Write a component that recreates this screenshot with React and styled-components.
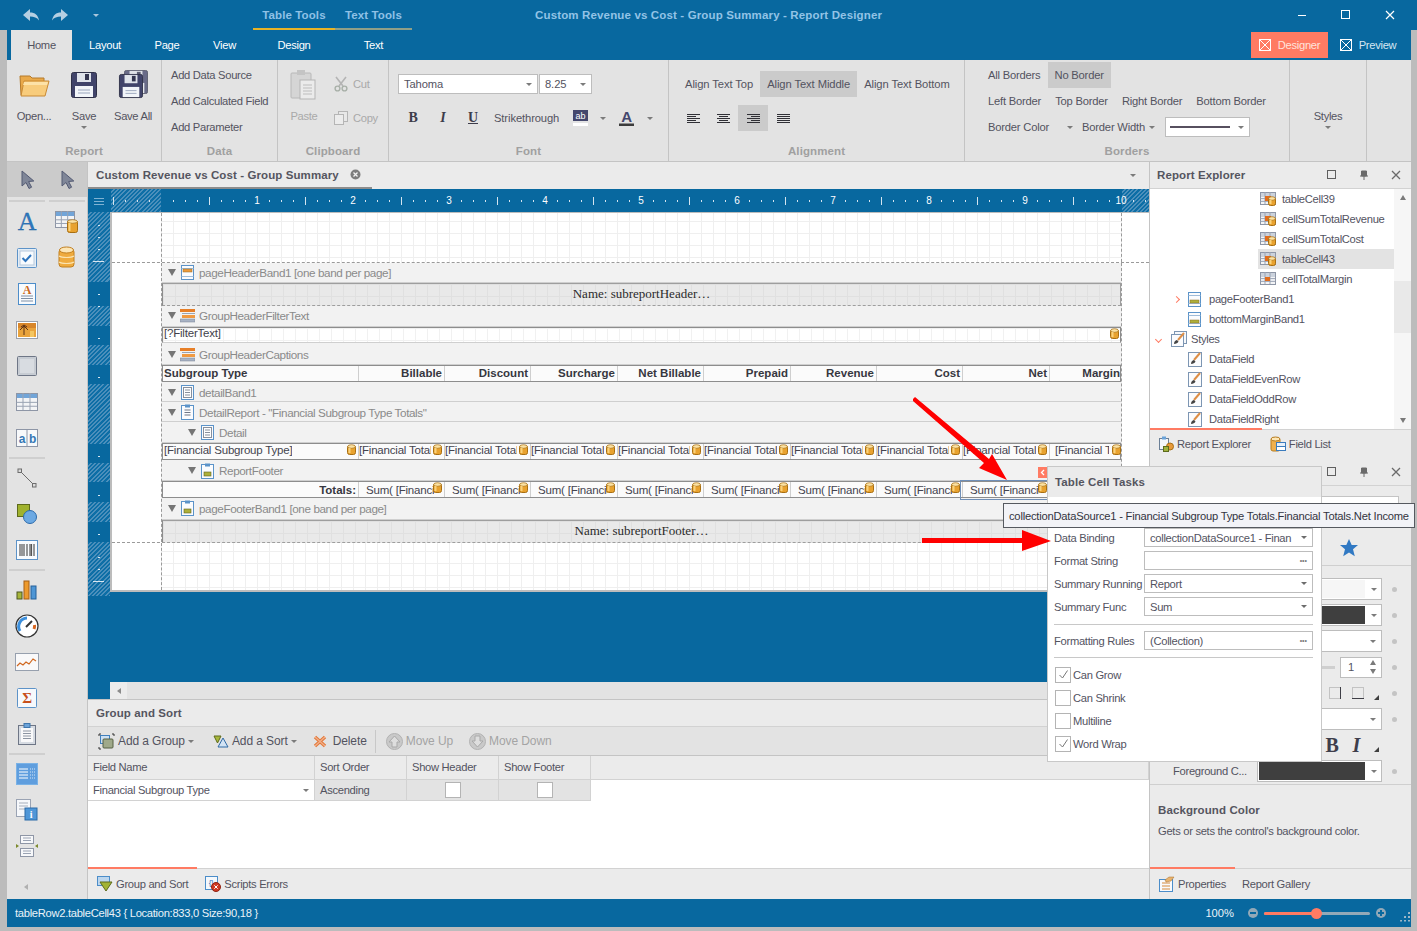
import React from 'react'
import styled, { createGlobalStyle } from 'styled-components'

const BLUE = '#08689f'
const CORAL = '#ff7b63'
const INK = '#53535f'

const GlobalStyle = createGlobalStyle`
  html, body { margin: 0; padding: 0; background: #bcbcbc; overflow: hidden; }
  * { box-sizing: border-box; }
  body { font-family: "Liberation Sans", Arial, sans-serif; font-size: 11.2px; letter-spacing: -0.3px; color: ${INK}; }
`

/* ---------- icons ---------- */
const Svg = ({ w = 16, h, vb, children }) => (
  <svg width={w} height={h || w} viewBox={vb || `0 0 ${w} ${h || w}`} style={{ display: 'block', flex: 'none' }}>{children}</svg>
)

const Undo = () => <Svg w={18} h={14}><path d="M1 7 8 1v3.5c5 0 8 2.5 9 8-2-3-5-4-9-4V13z" fill="#b5cfe2" /></Svg>
const Redo = () => <Svg w={18} h={14}><path d="M17 7 10 1v3.5c-5 0-8 2.5-9 8 2-3 5-4 9-4V13z" fill="#b5cfe2" /></Svg>
const WinMin = () => <Svg w={10}><path d="M1 5.5h8" stroke="#fff" strokeWidth="1" /></Svg>
const WinMax = () => <Svg w={10}><rect x=".5" y=".5" width="8" height="8" fill="none" stroke="#fff" /></Svg>
const WinClose = () => <Svg w={10}><path d="M1 1l8 8M9 1 1 9" stroke="#fff" strokeWidth="1.2" /></Svg>
const CrossBox = () => (
  <Svg w={12}><rect x=".5" y=".5" width="11" height="11" fill="none" stroke="#fff" /><path d="M1 1l10 10M11 1 1 11" stroke="#fff" /></Svg>
)

const Folder = () => (
  <Svg w={32}>
    <path d="M2 7h10l2 2h12v17H3z" fill="#e9a94a" stroke="#b57a2a" />
    <path d="M6 12h25l-4 15H3z" fill="#f8cc7c" stroke="#c98a35" />
    <path d="M6 13h24l-1 3H5z" fill="#fde2a8" />
  </Svg>
)
const FloppyShape = ({ x = 0, y = 0, s = 26, o = 1 }) => (
  <g transform={`translate(${x} ${y}) scale(${s / 26})`} opacity={o}>
    <rect x=".5" y=".5" width="25" height="25" rx="2" fill="#41446a" stroke="#2f3148" />
    <rect x="6" y="1" width="14" height="9" fill="#dfe3ea" />
    <rect x="14" y="2" width="4" height="6" fill="#33354f" />
    <rect x="4" y="14" width="18" height="11" fill="#f2f5f9" />
    <path d="M7 18h12M7 21h12" stroke="#9aa6bd" />
  </g>
)
const Floppy = () => <Svg w={32}><FloppyShape x={3} y={3} /></Svg>
const FloppyStack = () => <Svg w={32}><FloppyShape x={7} y={1} s={24} o={0.75} /><FloppyShape x={2} y={5} s={24} /></Svg>
const Paste = () => (
  <Svg w={32}>
    <rect x="3" y="4" width="20" height="25" rx="1" fill="#d5d5d5" stroke="#b8b8b8" />
    <rect x="9" y="1" width="8" height="5" fill="#c4c4c4" />
    <rect x="12" y="11" width="15" height="19" fill="#ebebeb" stroke="#b5b5b5" />
    <path d="M15 16h9M15 19h9M15 22h9M15 25h9" stroke="#bdbdbd" />
  </Svg>
)
const Cut = () => (
  <Svg w={16}>
    <path d="M3 1l7 9M13 1 6 10" stroke="#b4b4b4" strokeWidth="1.6" />
    <circle cx="4.5" cy="12.5" r="2.4" fill="none" stroke="#a8b0a8" strokeWidth="1.4" />
    <circle cx="11.5" cy="12.5" r="2.4" fill="none" stroke="#a8b0a8" strokeWidth="1.4" />
  </Svg>
)
const Copy = () => (
  <Svg w={16}><rect x="5.5" y="1.5" width="9" height="10" fill="#e8e8e8" stroke="#b5b5b5" /><rect x="1.5" y="4.5" width="9" height="10" fill="#ececec" stroke="#b5b5b5" /></Svg>
)
const AlignLines = ({ kind }) => {
  const rows = [13, kind === 'j' ? 13 : 9, 13, kind === 'j' ? 13 : 9, 13]
  return (
    <Svg w={13} h={11}>
      {rows.map((len, i) => {
        const x = kind === 'r' ? 13 - len : kind === 'c' ? (13 - len) / 2 : 0
        return <rect key={i} x={x} y={i * 2 + 1} width={len} height="1" fill="#303036" />
      })}
    </Svg>
  )
}
const Highlight = () => (
  <Svg w={15} h={16}>
    <rect width="15" height="11" fill="#44476d" />
    <text x="7.5" y="8.5" textAnchor="middle" fontSize="9" fill="#fff" fontFamily="Liberation Sans">ab</text>
    <rect y="13" width="15" height="3" fill="#fff" />
  </Svg>
)
const FontColor = () => (
  <Svg w={15} h={16}>
    <text x="7.5" y="12" textAnchor="middle" fontSize="15" fontWeight="700" fill="#44476d" fontFamily="Liberation Sans">A</text>
    <rect y="13.5" width="15" height="2.5" fill="#3c3c3c" />
  </Svg>
)
const CloseDot = () => (
  <Svg w={11}><circle cx="5.5" cy="5.5" r="5" fill="#7d7d7d" /><path d="M3.5 3.5l4 4M7.5 3.5l-4 4" stroke="#f2f2f2" strokeWidth="1.3" /></Svg>
)
const PanelSquare = () => <Svg w={10}><rect x=".5" y=".5" width="8" height="8" fill="none" stroke="#5f5f5f" /></Svg>
const Pin = () => <Svg w={10}><path d="M2.5 1h5v5h-5zM1 6h8M5 6v4" fill="#6a6a6a" stroke="#6a6a6a" /></Svg>
const PanelClose = () => <Svg w={10}><path d="M1 1l8 8M9 1 1 9" stroke="#6a6a6a" strokeWidth="1.3" /></Svg>

const Cursor = () => (
  <Svg w={16} h={20}><path d="M3 1v15l4-3.5 3 6 2.6-1.3-3-5.7 5.2-.5z" fill="#7f8698" stroke="#535a73" /></Svg>
)
const LetterA = () => (
  <Svg w={22} h={22}>
    <text x="11" y="19" textAnchor="middle" fontSize="26" fontFamily="Liberation Serif" fill="#2f78bd" stroke="#1d5f9e" strokeWidth=".3">A</text>
  </Svg>
)
const GridShape = ({ x = 0, y = 0, w = 22, h = 17, head = '#72a5d8' }) => (
  <g transform={`translate(${x} ${y})`}>
    <rect x=".5" y=".5" width={w} height={h} fill="#f3f4f6" stroke="#8e96a6" />
    <rect x="1" y="1" width={w - 1} height="4" fill={head} />
    <path d={`M.5 ${h * 0.55}H${w}M.5 ${h * 0.78}H${w}M${w / 3} 0V${h}M${(w * 2) / 3} 0V${h}`} stroke="#9aa3b3" />
  </g>
)
const DbShape = ({ x = 0, y = 0, w = 10, h = 12 }) => (
  <g transform={`translate(${x} ${y})`}>
    <rect x=".5" y="1.5" width={w - 1} height={h - 2} rx="2" fill="#e8a22f" stroke="#a86f12" />
    <ellipse cx={w / 2} cy="2.5" rx={w / 2 - 0.7} ry="1.8" fill="#fbe2a4" stroke="#a86f12" strokeWidth=".7" />
    <rect x="1.5" y="4" width="2" height={h - 6} fill="#f9d27c" />
  </g>
)
const TableDb = () => <Svg w={24} h={24}><GridShape x={0} y={1} w={19} h={16} /><DbShape x={12} y={9} w={11} h={14} /></Svg>
const Database = () => (
  <Svg w={18} h={24}>
    <rect x="1" y="3" width="15" height="18" rx="3" fill="#efab3e" stroke="#c18021" />
    <path d="M1 10c3 2 12 2 15 0M1 16c3 2 12 2 15 0" fill="none" stroke="#fbe3ae" strokeWidth="1.2" />
    <ellipse cx="8.5" cy="4" rx="7" ry="3" fill="#fde6b5" stroke="#c18021" />
  </Svg>
)
const CheckTool = () => (
  <Svg w={20}><rect x=".5" y=".5" width="19" height="19" rx="1" fill="#e3edf6" stroke="#5d93c8" /><rect x="3" y="3" width="14" height="14" fill="#f8fbfe" stroke="#b6c8db" /><path d="M5.5 10l3 3 5.5-6" fill="none" stroke="#2e74bd" strokeWidth="2" /></Svg>
)
const RichText = () => (
  <Svg w={18} h={22}>
    <rect x=".5" y=".5" width="17" height="21" fill="#f8fbfe" stroke="#4d8dc9" />
    <text x="9" y="11" textAnchor="middle" fontSize="12" fontWeight="700" fontFamily="Liberation Serif" fill="#cc6a1f">A</text>
    <path d="M3 13h12M3 15.5h12M3 18h12" stroke="#7e90a6" />
  </Svg>
)
const Picture = () => (
  <Svg w={22} h={18}>
    <rect x=".5" y=".5" width="21" height="17" fill="#fff" stroke="#9aa0ab" />
    <rect x="2" y="2" width="18" height="14" fill="#e9a33c" />
    <rect x="2" y="2" width="18" height="5" fill="#d8862a" />
    <path d="M8 4v10M5 6l3-2 3 2M4 9l4-4 4 4" stroke="#5b3216" fill="none" />
    <rect x="14" y="10" width="4" height="6" fill="#f4c661" />
  </Svg>
)
const PanelTool = () => (
  <Svg w={20}><rect x=".5" y=".5" width="19" height="19" rx="1" fill="#c7ccd3" stroke="#6e7686" /><rect x="3" y="3" width="14" height="14" fill="#d8dce1" /></Svg>
)
const TableTool = () => <Svg w={22} h={18}><GridShape x={0} y={0} w={21} h={17} /></Svg>
const LabelTool = () => (
  <Svg w={22} h={18}>
    <rect x=".5" y=".5" width="21" height="17" fill="#f7f9fb" stroke="#8e96a6" />
    <path d="M11 .5v17" stroke="#8e96a6" />
    <text x="6" y="14" textAnchor="middle" fontSize="12" fontWeight="700" fill="#3578b5" fontFamily="Liberation Sans">a</text>
    <text x="16.5" y="14" textAnchor="middle" fontSize="12" fontWeight="700" fill="#3578b5" fontFamily="Liberation Sans">b</text>
  </Svg>
)
const LineTool = () => (
  <Svg w={20}><path d="M3 3l14 14" stroke="#6d6d6d" /><rect x="1" y="1" width="3.5" height="3.5" fill="#dcdcdc" stroke="#6d6d6d" /><rect x="15.5" y="15.5" width="3.5" height="3.5" fill="#dcdcdc" stroke="#6d6d6d" /></Svg>
)
const ShapeTool = () => (
  <Svg w={20}><rect x=".5" y=".5" width="12" height="12" fill="#a0b22e" stroke="#5e6b1c" /><circle cx="13" cy="13" r="6.5" fill="#6ca9e3" stroke="#2d6bab" /></Svg>
)
const Barcode = () => (
  <Svg w={22} h={20}>
    <rect x=".5" y=".5" width="21" height="19" fill="#f8fbfe" stroke="#5d93c8" />
    <path d="M4 4v12M6 4v12M8 4v12M11 4v12M14 4v12M15.5 4v12M18 4v12" stroke="#555" strokeWidth="1.2" />
  </Svg>
)
const ChartTool = () => (
  <Svg w={22} h={20}>
    <rect x="1" y="12" width="5" height="7" fill="#a6b53a" stroke="#4c5620" />
    <rect x="8" y="1" width="5" height="18" fill="#ed9a2d" stroke="#a65e14" />
    <rect x="15" y="6" width="5" height="13" fill="#4e96d5" stroke="#24609a" />
  </Svg>
)
const Gauge = () => (
  <Svg w={24}>
    <circle cx="12" cy="12" r="11" fill="#fff" stroke="#333" strokeWidth="1.2" />
    <path d="M5 17A8.5 8.5 0 0 1 12 4" fill="none" stroke="#3c8fdc" strokeWidth="3" />
    <path d="M19 15a8 8 0 0 0 .5-4" fill="none" stroke="#d9661f" strokeWidth="3" />
    <path d="M11 13l6-6" stroke="#333" strokeWidth="2" />
  </Svg>
)
const SparkTool = () => (
  <Svg w={24} h={18}><rect x=".5" y=".5" width="23" height="17" fill="#f9f9fa" stroke="#97a0ae" /><path d="M2 13l3-3 3 2 3-3 3 2 4-5 3 2" fill="none" stroke="#d0671e" strokeWidth="1.2" /></Svg>
)
const SigmaTool = () => (
  <Svg w={20}>
    <rect x=".5" y=".5" width="19" height="19" rx="1" fill="#f6f9fc" stroke="#5d93c8" />
    <text x="10" y="15" textAnchor="middle" fontSize="15" fontWeight="700" fill="#c8501b" fontFamily="Liberation Serif">Σ</text>
  </Svg>
)
const ClipTool = () => (
  <Svg w={18} h={22}>
    <rect x=".5" y="2.5" width="17" height="19" fill="#d6dbe2" stroke="#6e7686" />
    <rect x="3" y="5" width="12" height="14" fill="#f9f9fa" />
    <rect x="6" y=".5" width="6" height="4" fill="#6ba3d9" stroke="#3f76ac" />
    <path d="M5 8h8M5 10.5h8M5 13h8M5 15.5h8" stroke="#8d95a2" />
  </Svg>
)
const TocTool = () => (
  <Svg w={22}>
    <rect x=".5" y=".5" width="21" height="21" fill="#5f9ede" stroke="#7ab2e6" />
    <path d="M3 6h9M3 9h9M3 12h9M3 15h9" stroke="#fff" />
    <path d="M14 6h5M14 9h5M14 12h5M14 15h5" stroke="#d4e6f7" strokeDasharray="1 1" />
  </Svg>
)
const PageInfo = () => (
  <Svg w={22}>
    <rect x=".5" y=".5" width="14" height="17" fill="#f6f8fb" stroke="#9aa3b3" />
    <path d="M3 4h9M3 7h9M3 10h9" stroke="#a6aebb" />
    <rect x="9" y="9" width="12" height="12" fill="#4f97d8" stroke="#2b6aa8" />
    <text x="15" y="19" textAnchor="middle" fontSize="10" fontWeight="700" fill="#fff" fontFamily="Liberation Serif">i</text>
  </Svg>
)
const CrossBand = () => (
  <Svg w={22}>
    <rect x="4.5" y=".5" width="13" height="8" fill="#f7f8fa" stroke="#8e96a6" />
    <rect x="4.5" y="13.5" width="13" height="8" fill="#f7f8fa" stroke="#8e96a6" />
    <path d="M7 3h8M7 5.5h8M7 16h8M7 18.5h8" stroke="#9aa3b3" />
    <path d="M0 9l3 2-3 2zM22 9l-3 2 3 2z" fill="#7d8a2c" />
  </Svg>
)

const BandPage = ({ slot = 'top', tone = '#ec9a3c' }) => (
  <Svg w={13} h={15}>
    <rect x=".5" y=".5" width="12" height="14" fill="#fbfcfe" stroke="#5b93c9" />
    <path d="M.5 3.5h12M.5 11.5h12" stroke="#9fbcd9" />
    <rect x="2" y={slot === 'top' ? 4 : 8} width="9" height="3" fill={tone} stroke="#8c6a2a" strokeWidth=".5" />
  </Svg>
)
const BandGroup = () => (
  <Svg w={15} h={15}>
    <rect y="1" width="15" height="3" fill="#e77f27" />
    <rect x="2" y="5" width="13" height="1" fill="#9ba4b2" />
    <rect x="2" y="7" width="13" height="3" fill="#f09a42" />
    <rect y="11" width="15" height="3" fill="#a8b3c4" stroke="#788294" strokeWidth=".5" />
  </Svg>
)
const BandDetail = () => (
  <Svg w={13} h={15}>
    <rect x=".5" y=".5" width="12" height="14" fill="#fbfcfe" stroke="#5b93c9" />
    <rect x="2.5" y="2.5" width="8" height="10" fill="#fff" stroke="#878f9c" />
    <path d="M4 5h5M4 7.5h5M4 10h5" stroke="#878f9c" />
  </Svg>
)
const BandDetailReport = () => (
  <Svg w={13} h={16}>
    <rect x=".5" y="1.5" width="12" height="14" fill="#fbfcfe" stroke="#5b93c9" />
    <rect x="4" y=".5" width="5" height="3" fill="#5b93c9" />
    <path d="M3.5 6h6M3.5 8.5h6M3.5 11h6" stroke="#6e7686" />
  </Svg>
)
const BandFooter = () => (
  <Svg w={13} h={16}>
    <rect x=".5" y="1.5" width="12" height="14" fill="#fbfcfe" stroke="#5b93c9" />
    <rect x="4" y=".5" width="5" height="3" fill="#5b93c9" />
    <rect x="3" y="9" width="7" height="4" fill="#adb03a" stroke="#5f6220" strokeWidth=".6" />
  </Svg>
)
const SmallDb = () => <Svg w={9} h={11}><DbShape w={9} h={11} /></Svg>

const CellDb = () => <Svg w={16}><GridShape y={1} w={15} h={12} head="#cbd2dc" /><rect x="5" y="5" width="6" height="5" fill="#e06c1d" /><DbShape x={8} y={5} w={8} h={10} /></Svg>
const CellPlain = () => <Svg w={16}><GridShape y={1} w={15} h={12} head="#cbd2dc" /><rect x="5" y="6" width="5" height="4" fill="#e06c1d" /></Svg>
const TreeFooter = () => <BandPage slot="bottom" tone="#adb03a" />
const BrushDoc = () => (
  <Svg w={14} h={15}>
    <rect x=".5" y=".5" width="13" height="14" fill="#fbfcfe" stroke="#7d96b3" />
    <path d="M12 1 6 8" stroke="#dd8e47" strokeWidth="2" />
    <path d="M3 12c0-3 2-4 3-4l1.5 1.5C7 11 5 12 3 12z" fill="#444" />
  </Svg>
)
const StylesDoc = () => (
  <Svg w={16}>
    <rect x="3.5" y=".5" width="12" height="12" fill="#f6f8fb" stroke="#7d96b3" />
    <rect x=".5" y="3.5" width="12" height="12" fill="#fbfcfe" stroke="#7d96b3" />
    <path d="M13 2 7 9" stroke="#dd8e47" strokeWidth="2" />
    <path d="M3 13c0-3 2-4 3-4l1.5 1.5C7 12 5 13 3 13z" fill="#444" />
  </Svg>
)
const ExplorerIcon = () => (
  <Svg w={16}>
    <rect x="1.5" y="2.5" width="9" height="11" fill="#f4f6f9" stroke="#6b7f96" />
    <rect x="4" y=".5" width="4" height="3" fill="#6ba3d9" />
    <circle cx="12" cy="10.5" r="3.5" fill="#e79a3a" stroke="#a86f12" />
    <rect x="5.5" y="10.5" width="5" height="5" fill="#9fb23c" stroke="#5e6b1c" />
  </Svg>
)
const FieldListIcon = () => (
  <Svg w={16}>
    <rect x="1" y="2" width="9" height="13" rx="2" fill="#f0b14e" stroke="#b77d20" />
    <ellipse cx="5.5" cy="3" rx="4.5" ry="2" fill="#fde6b5" stroke="#b77d20" />
    <rect x="6.5" y="6.5" width="9" height="4" fill="#e6f0fa" stroke="#3a7bbd" />
    <rect x="6.5" y="10.5" width="9" height="4" fill="#fff" stroke="#3a7bbd" />
  </Svg>
)
const PropsIcon = () => (
  <Svg w={16}>
    <rect x=".5" y="3.5" width="13" height="12" fill="#f9fafc" stroke="#4b8dc9" />
    <path d="M3 7h8M3 10h8M3 13h8" stroke="#d58a3c" />
    <path d="M6 4l4-3h5l-3 4-5 1z" fill="#e8b36e" stroke="#a86f2a" strokeWidth=".5" />
  </Svg>
)
const GroupFilterIcon = () => (
  <Svg w={16}>
    <rect x=".5" y=".5" width="12" height="9" fill="#bcd6ee" stroke="#4b8dc9" />
    <path d="M3 6h12l-6 9z" fill="#a2b334" stroke="#5e6b1c" />
  </Svg>
)
const ScriptErrIcon = () => (
  <Svg w={16}>
    <rect x=".5" y=".5" width="12" height="13" fill="#f4f8fc" stroke="#4b8dc9" />
    <text x="6" y="9" textAnchor="middle" fontSize="8" fill="#3574b4" fontFamily="Liberation Sans">{'{}'}</text>
    <circle cx="11" cy="11" r="4.5" fill="#cf3a22" stroke="#8f2413" />
    <path d="M9.3 9.3l3.4 3.4M12.7 9.3l-3.4 3.4" stroke="#fff" />
  </Svg>
)
const AddGroup = () => (
  <Svg w={17}>
    <path d="M1 3V1h2M14 1h2v2M1 14v2h2" fill="none" stroke="#333" />
    <rect x="2.5" y="2.5" width="9" height="8" fill="#cce0f3" stroke="#3f7fbd" />
    <rect x="5" y="6" width="10" height="9" rx="1" fill="#9fa98a" stroke="#566045" />
  </Svg>
)
const AddSort = () => (
  <Svg w={16}>
    <path d="M1 3h7L4.5 10z" fill="#a8b83d" stroke="#5e6b1c" />
    <path d="M10 5l5 9H5z" fill="#d2e3f4" stroke="#2f6aa6" />
  </Svg>
)
const DeleteX = () => <Svg w={14}><path d="M2 3l10 9M12 3 2 12" stroke="#e2793a" strokeWidth="3.4" /><path d="M2 3l10 9M12 3 2 12" stroke="#f3b08c" strokeWidth="1.2" /></Svg>
const MoveIcon = ({ down }) => (
  <Svg w={17}>
    <circle cx="8.5" cy="8.5" r="8" fill="#c9c9c9" stroke="#b2b2b2" />
    <path d={down ? 'M6 3h5v5h3l-5.5 6L3 8h3z' : 'M6 14h5V9h3L8.5 3 3 9h3z'} fill="#dedede" stroke="#a9a9a9" />
  </Svg>
)
const Star = () => <Svg w={18}><path d="M9 0l2.7 6h6.3l-5 4.3 1.8 7L9 13.5 3.2 17.3 5 10.3 0 6h6.3z" fill="#3179c3" /></Svg>
const BorderSideIcon = ({ side }) => (
  <Svg w={14}>
    <rect x="1.5" y="1.5" width="11" height="11" fill="none" stroke="#9a9a9a" strokeDasharray="1 1" />
    {side === 'right' ? <path d="M12.5 1v12" stroke="#3e3e46" /> : <path d="M1 12.5h12" stroke="#3e3e46" />}
  </Svg>
)
const CellSwatch = styled.span`
  flex: none;
  width: ${p => p.$w || 106}px;
  height: 100%;
  background: ${p => p.$bg};
`

/* ---------- title bar ---------- */
const Window = styled.div`
  position: relative;
  width: 1417px;
  height: 931px;
  display: flex;
  flex-direction: column;
  overflow: hidden;
  background: #bcbcbc;
`
const TitleBar = styled.div`
  flex: none;
  height: 30px;
  display: flex;
  align-items: stretch;
  background: ${BLUE};
`
const QuickAccess = styled.div`
  width: 253px;
  display: flex;
  align-items: center;
  padding-left: 22px;
  gap: 11px;
`
const QuickCaret = styled.i`
  margin-left: 13px;
  border: 3px solid transparent;
  border-top: 3px solid #a9c6dc;
  border-bottom: 0;
`
const ContextTab = styled.div`
  width: ${p => p.$w}px;
  display: flex;
  align-items: center;
  justify-content: center;
  padding-top: 2px;
  font-size: 11.5px;
  letter-spacing: 0.1px;
  font-weight: 700;
  color: #8fc1e6;
  border-bottom: 2px solid ${p => p.$line};
`
const WindowTitle = styled.div`
  margin-left: 123px;
  flex: 1;
  display: flex;
  align-items: center;
  font-size: 11.5px;
  letter-spacing: 0.15px;
  font-weight: 700;
  color: #92c3e6;
  white-space: nowrap;
`
const WinButtons = styled.div`
  display: flex;
  align-items: center;
  gap: 34px;
  padding-right: 22px;
`

/* ---------- ribbon tabs ---------- */
const Frame = styled.div`
  flex: 1;
  min-height: 0;
  display: flex;
  flex-direction: column;
  padding: 0 6px 4px 7px;
`
const TabRow = styled.div`
  flex: none;
  height: 30px;
  display: flex;
  align-items: stretch;
  padding-left: 4px;
  background: ${BLUE};
`
const RibbonTab = styled.div`
  width: ${p => p.$w}px;
  display: flex;
  align-items: center;
  justify-content: center;
  color: ${p => (p.$active ? INK : '#fff')};
  background: ${p => (p.$active ? '#e3e3e3' : 'transparent')};
`
const ModeButton = styled.div`
  margin: 2px 0;
  display: flex;
  align-items: center;
  justify-content: center;
  gap: 7px;
  width: ${p => p.$w}px;
  color: ${p => (p.$active ? '#ffe3dc' : '#d5e6f2')};
  background: ${p => (p.$active ? CORAL : 'transparent')};
`
const ModeGroup = styled.div`
  margin-left: auto;
  margin-right: 9px;
  display: flex;
  gap: 6px;
`

/* ---------- ribbon ---------- */
const Ribbon = styled.div`
  flex: none;
  height: 102px;
  display: flex;
  background: #e3e3e3;
  border-bottom: 1px solid #c4c4c4;
`
const RibbonGroup = styled.section`
  width: ${p => p.$w}px;
  display: flex;
  flex-direction: column;
  border-right: 1px solid #c4c4c4;
  ${p => p.$last && 'flex: 1; border-right: 0;'}
`
const GroupBody = styled.div`
  flex: 1;
  min-height: 0;
  display: flex;
  padding: ${p => p.$pad || '0'};
`
const GroupCaption = styled.div`
  flex: none;
  height: 17px;
  display: flex;
  align-items: flex-start;
  justify-content: center;
  font-size: 11.5px;
  letter-spacing: 0.1px;
  line-height: 14px;
  font-weight: 700;
  color: #a0a0a0;
`
const BigButton = styled.div`
  width: ${p => p.$w}px;
  display: flex;
  flex-direction: column;
  align-items: center;
  padding-top: 9px;
  color: ${p => (p.$off ? '#a9a9a9' : INK)};
`
const BigLabel = styled.span`
  margin-top: 8px;
  line-height: 14px;
  white-space: nowrap;
`
const ArrowDown = styled.i`
  display: inline-block;
  flex: none;
  border: ${p => p.$s || 3}px solid transparent;
  border-top-color: ${p => p.$c || '#7b7b7b'};
  border-bottom: 0;
  margin-left: ${p => p.$ml || 0}px;
  margin-right: ${p => p.$mr || 0}px;
  margin-top: ${p => p.$mt || 0}px;
`
const CmdStack = styled.div`
  display: flex;
  flex-direction: column;
  padding-top: ${p => p.$top || 2}px;
  padding-left: ${p => p.$left || 0}px;
  letter-spacing: ${p => p.$ls || '-0.3px'};
`
const CmdRow = styled.div`
  display: flex;
  align-items: center;
  height: ${p => p.$h || 26}px;
  margin-bottom: ${p => p.$mb || 0}px;
  gap: ${p => p.$gap || 0}px;
`
const Cmd = styled.div`
  height: 26px;
  display: flex;
  align-items: center;
  margin-left: ${p => p.$ml || 0}px;
  padding: 0 ${p => (p.$px === undefined ? 7 : p.$px)}px;
  white-space: nowrap;
  color: ${p => (p.$off ? '#a9a9a9' : INK)};
  background: ${p => (p.$on ? '#cbcbcb' : 'transparent')};
`
const Combo = styled.div`
  height: ${p => p.$h || 20}px;
  width: ${p => (p.$w ? `${p.$w}px` : '100%')};
  margin-left: ${p => p.$ml || 0}px;
  display: flex;
  align-items: center;
  justify-content: space-between;
  padding: 0 5px;
  background: #fff;
  border: 1px solid #bdbdbd;
  color: ${INK};
  white-space: nowrap;
  overflow: hidden;
`
const FontButton = styled.div`
  width: 30px;
  height: 26px;
  display: flex;
  align-items: center;
  justify-content: center;
  font-family: "Liberation Serif", serif;
  font-size: 14px;
  font-weight: 700;
  color: #3c3c4a;
  font-style: ${p => (p.$i ? 'italic' : 'normal')};
  text-decoration: ${p => (p.$u ? 'underline' : 'none')};
`
const AlignButton = styled.div`
  width: 30px;
  height: 26px;
  display: flex;
  align-items: center;
  justify-content: center;
  background: ${p => (p.$on ? '#cbcbcb' : 'transparent')};
`
const LineSample = styled.span`
  flex: 1;
  height: 2px;
  margin: 0 8px 0 -1px;
  background: #57505f;
`
const IconGap = styled.span`
  flex: none;
  width: ${p => p.$w}px;
`

/* ---------- work area ---------- */
const Workspace = styled.div`
  flex: 1;
  min-height: 0;
  display: flex;
`
const Toolbox = styled.aside`
  flex: none;
  width: 81px;
  display: flex;
  flex-direction: column;
  background: #e3e3e3;
  border-right: 1px solid #c4c4c4;
`
const ToolPointers = styled.div`
  flex: none;
  height: 35px;
  display: grid;
  grid-template-columns: 40px 40px;
  align-items: center;
  justify-items: center;
  background: #cbcbcb;
`
const ToolRule = styled.div`
  flex: none;
  display: grid;
  grid-template-columns: 36px 36px;
  gap: 4px;
  padding: ${p => p.$pad || '3px 2px 2px'};
`
const ToolRuleLine = styled.div`
  height: 2px;
  background: ${p => (p.$empty ? 'transparent' : '#cfcfcf')};
`
const ToolRow = styled.div`
  flex: none;
  height: 36px;
  display: grid;
  grid-template-columns: 40px 40px;
  align-items: center;
  justify-items: center;
`
const ToolFoot = styled.div`
  margin-top: auto;
  height: 15px;
  padding-left: 17px;
  display: flex;
  align-items: flex-start;
`
const ScrollLeftGlyph = styled.i`
  border: 3px solid transparent;
  border-right: 4px solid ${p => p.$c || '#8a8a8a'};
  border-left: 0;
`
const Center = styled.main`
  flex: none;
  width: 1061px;
  display: flex;
  flex-direction: column;
`
const PaneHead = styled.header`
  flex: none;
  height: 27px;
  display: flex;
  align-items: center;
  padding: 0 ${p => p.$pr || 8}px 0 ${p => p.$pl || 8}px;
  background: #ebebeb;
  border-bottom: ${p => (p.$noline ? '0' : '1px solid #d2d2d2')};
  font-size: 11.5px;
  letter-spacing: 0.1px;
  font-weight: 700;
  color: #55555f;
`
const DocTitle = styled.div`
  position: relative;
  height: 100%;
  width: 284px;
  margin-left: -8px;
  padding-left: 8px;
  display: flex;
  align-items: center;
  gap: 11px;
  border-bottom: 2px solid #8c8c8c;
`
const PaneTools = styled.div`
  margin-left: auto;
  display: flex;
  align-items: center;
  gap: 22px;
`
const Surface = styled.div`
  flex: 1;
  min-height: 0;
  display: flex;
  flex-direction: column;
  background: ${BLUE};
`
const RulerRow = styled.div`
  flex: none;
  height: 23px;
  display: flex;
`
const Burger = styled.div`
  flex: none;
  width: 22px;
  display: flex;
  align-items: center;
  justify-content: center;
`
const hatch = 'repeating-linear-gradient(135deg, #0d6ea6 0 1.5px, #4c8fbb 1.5px 3px)'
const RulerTrack = styled.div`
  flex: 1;
  display: flex;
  overflow: hidden;
  margin-left: -3px;
  background-image: ${hatch}, ${hatch};
  background-repeat: no-repeat;
  background-size: 50px 100%, 27px 100%;
  background-position: 4px 0, right 0;
`
const RulerCell = styled.div`
  flex: none;
  width: 12px;
  display: flex;
  align-items: center;
  justify-content: center;
  color: #fff;
  font-size: 10px;
  letter-spacing: 0;
`
const RulerDot = styled.i`
  width: 1px;
  height: ${p => p.$h}px;
  background: #d3e4ef;
`
const CanvasRow = styled.div`
  flex: 1;
  min-height: 0;
  display: flex;
  align-items: flex-start;
`
const VRuler = styled.div`
  position: relative;
  flex: none;
  width: 22px;
  display: flex;
  flex-direction: column;
`
const VSeg = styled.div`
  height: ${p => p.$h}px;
  background: ${p => (p.$hatch ? hatch : 'transparent')};
`
const VMark = styled.i`
  position: absolute;
  left: ${p => (p.$long ? 5 : 10)}px;
  width: ${p => (p.$long ? 11 : 2)}px;
  height: 1px;
  background: #d8e7f1;
`
const Page = styled.div`
  flex: 1;
  height: 380px;
  display: flex;
  flex-direction: column;
  background: #fff;
  border-top: 1px solid #bcbcbc;
  border-left: 2px solid #bcbcbc;
  border-bottom: 2px solid #bcbcbc;
`
const grid = (bg, line) => `
  background-color: ${bg};
  background-image: linear-gradient(${line} 1px, transparent 1px), linear-gradient(90deg, ${line} 1px, transparent 1px);
  background-size: 12px 12px;
`
const PageRow = styled.div`
  display: flex;
  height: ${p => p.$h}px;
  ${p => p.$dash && 'border-bottom: 1px dashed #9a9a9a;'}
`
const Gutter = styled.div`
  flex: none;
  width: 49px;
  background: #fff;
`
const RightGutter = styled.div`
  flex: 1;
  background: #fff;
`
const PageBody = styled.div`
  flex: none;
  width: 961px;
  border-left: 1px dashed #9a9a9a;
  border-right: 1px dashed #9a9a9a;
  ${grid('#fff', '#efefef')}
  background-position: 11px 8px;
`
const BandHead = styled.div`
  height: ${p => p.$h || 20}px;
  display: flex;
  align-items: center;
  padding-top: ${p => (p.$tight ? 0 : 1)}px;
  padding-bottom: ${p => (p.$tight ? 1 : 0)}px;
  padding-left: ${p => 6 + (p.$level || 0) * 20}px;
  background: #f2f2f2;
  border-bottom: 1px solid #cfcfcf;
  font-size: 11.7px;
  letter-spacing: -0.4px;
  color: #8a8a8a;
  white-space: nowrap;
  & > svg { margin-left: ${p => (p.$wide ? 4 : 5)}px; margin-right: ${p => (p.$wide ? 4 : 5)}px; }
`
const BandToggle = styled.i`
  flex: none;
  border: 4px solid transparent;
  border-top: 7px solid #757575;
  border-bottom: 0;
`
const GreyBand = styled.div`
  height: ${p => p.$h}px;
  display: flex;
  align-items: center;
  justify-content: center;
  padding-bottom: 2px;
  border: 1px solid #9e9e9e;
  border-left-color: #8d8d8d;
  border-bottom: 1px dashed #9e9e9e;
  ${grid('#e9e9e9', '#e0e0e0')}
  font-family: "Liberation Serif", serif;
  font-size: 13px;
  letter-spacing: 0;
  color: #2b2b2b;
`
const PlainBand = styled.div`
  position: relative;
  height: ${p => p.$h}px;
  display: flex;
  align-items: center;
  padding: 0 0 4px 1px;
  border-top: 1px solid #8d8d8d;
  border-left: 1px solid #8d8d8d;
  border-right: 1px solid #8d8d8d;
  border-bottom: 1px solid #cfcfcf;
  font-size: 11.5px;
  letter-spacing: -0.2px;
  color: #3f3f4a;
  ${grid('#fff', '#f1f1f1')}
`
const BandTable = styled.div`
  height: ${p => p.$h}px;
  display: flex;
  border: 1px solid #8d8d8d;
  background: #fbfbfb;
`
const TableCell = styled.div`
  position: relative;
  flex: none;
  width: ${p => p.$w}px;
  display: flex;
  align-items: center;
  justify-content: ${p => (p.$right ? 'flex-end' : 'flex-start')};
  padding: 0 ${p => (p.$pr === undefined ? 2 : p.$pr)}px ${p => p.$pb || 0}px ${p => p.$pl || 0}px;
  border-right: ${p => (p.$last ? '0' : '1px solid #cfcfcf')};
  font-size: 11.5px;
  letter-spacing: ${p => (p.$bold ? '0' : '-0.2px')};
  font-weight: ${p => (p.$bold ? 700 : 400)};
  color: ${p => (p.$bold ? '#37373f' : '#44444f')};
  white-space: nowrap;
  overflow: hidden;
`
const CellText = styled.span`
  min-width: 0;
  overflow: hidden;
`
const CellBadge = styled.span`
  position: absolute;
  top: ${p => p.$top || 0}px;
  right: ${p => p.$r || 0}px;
`
const HScroll = styled.div`
  flex: none;
  height: 17px;
  margin-left: 22px;
  display: flex;
  background: #e3e3e3;
`
const HScrollLeft = styled.div`
  width: 17px;
  display: flex;
  align-items: center;
  justify-content: center;
  background: #ececec;
`

/* ---------- group and sort ---------- */
const GroupPane = styled.section`
  flex: none;
  height: 169px;
  display: flex;
  flex-direction: column;
  background: #fff;
  border-top: 1px solid #c4c4c4;
`
const SortTools = styled.div`
  flex: none;
  height: 29px;
  display: flex;
  align-items: center;
  padding-left: 10px;
  background: #e3e3e3;
  border-bottom: 1px solid #c4c4c4;
`
const SortTool = styled.div`
  display: flex;
  align-items: center;
  gap: ${p => p.$gap || 3}px;
  margin-right: ${p => p.$mr || 0}px;
  color: ${p => (p.$off ? '#a4a4a4' : INK)};
  font-size: 12px;
  letter-spacing: -0.1px;
`
const SortDivider = styled.span`
  width: 1px;
  height: 23px;
  background: #c8c8c8;
  margin-right: 10px;
`
const SortGrid = styled.div`
  display: grid;
  grid-template-columns: 227px 92px 92px 92px 1fr;
`
const SortHeadCell = styled.div`
  height: 24px;
  display: flex;
  align-items: center;
  padding: 0 0 2px 5px;
  background: #ebebeb;
  border-right: 1px solid #d2d2d2;
  border-bottom: 1px solid #d2d2d2;
`
const SortCell = styled.div`
  height: 21px;
  display: flex;
  align-items: center;
  justify-content: ${p => (p.$center ? 'center' : 'space-between')};
  padding: 0 ${p => (p.$center ? 0 : 5)}px;
  background: ${p => (p.$white ? '#fff' : '#e3e3e3')};
  border-right: 1px solid #d2d2d2;
  border-bottom: 1px solid #d2d2d2;
`
const Box = styled.span`
  flex: none;
  width: 16px;
  height: 16px;
  display: flex;
  align-items: center;
  justify-content: center;
  background: #fff;
  border: 1px solid #b4b4b4;
`
const DockTabs = styled.div`
  flex: none;
  height: ${p => p.$h || 31}px;
  display: flex;
  align-items: center;
  gap: ${p => p.$gap || 17}px;
  padding: 0 0 ${p => p.$pb || 0}px ${p => p.$pl || 9}px;
  background: #ebebeb;
  border-top: 1px solid #d2d2d2;
  position: relative;
`
const DockAccent = styled.i`
  position: absolute;
  left: 0;
  top: -2px;
  height: 2px;
  width: ${p => p.$w}px;
  background: ${CORAL};
`
const DockTab = styled.div`
  display: flex;
  align-items: center;
  gap: 3px;
`

/* ---------- right dock ---------- */
const Dock = styled.aside`
  flex: 1;
  min-width: 0;
  display: flex;
  flex-direction: column;
  background: #ebebeb;
  border-left: 1px solid #c4c4c4;
`
const Tree = styled.div`
  flex: none;
  height: 240px;
  display: flex;
  background: #fff;
`
const TreeList = styled.div`
  flex: 1;
  overflow: hidden;
`
const TreeRow = styled.div`
  height: 20px;
  display: flex;
  align-items: center;
  margin-left: ${p => p.$indent}px;
  padding-left: ${p => p.$pl || 0}px;
  gap: ${p => p.$gap || 8}px;
  color: ${INK};
  background: ${p => (p.$on ? '#e3e3e3' : 'transparent')};
`
const TreeChevron = styled.i`
  flex: none;
  width: 5px;
  height: 5px;
  margin-right: ${p => p.$mr || 0}px;
  border-right: 1.5px solid ${CORAL};
  border-bottom: ${p => (p.$open ? `1.5px solid ${CORAL}` : '0')};
  border-top: ${p => (p.$open ? '0' : `1.5px solid ${CORAL}`)};
  transform: rotate(45deg);
`
const VScroll = styled.div`
  flex: none;
  width: 17px;
  display: flex;
  flex-direction: column;
  align-items: center;
  justify-content: space-between;
  background: #f6f6f6;
`
const ScrollCap = styled.div`
  height: 17px;
  display: flex;
  align-items: center;
  justify-content: center;
`
const ScrollGlyph = styled.i`
  border: 3.5px solid transparent;
  ${p => (p.$up ? 'border-bottom: 5px solid #7a7a7a; border-top: 0;' : 'border-top: 5px solid #7a7a7a; border-bottom: 0;')}
`
const ScrollThumb = styled.div`
  width: 100%;
  height: 52px;
  margin-top: 75px;
  margin-bottom: auto;
  background: #e9e9e9;
`
const QuickPane = styled.div`
  flex: none;
  height: 80px;
  display: flex;
  flex-direction: column;
  border-bottom: 1px solid #cfcfcf;
  padding: 10px 12px 0 8px;
`
const QuickInput = styled.div`
  height: 20px;
  background: #fff;
  border: 1px solid #c4c4c4;
`
const QuickIcons = styled.div`
  margin-top: 23px;
  display: flex;
  justify-content: flex-end;
  padding-right: 41px;
`
const PropRows = styled.div`
  flex: none;
  height: 219px;
  padding-top: 10px;
  border-bottom: 1px solid #cfcfcf;
`
const PropRow = styled.div`
  height: 26px;
  display: flex;
  align-items: center;
  padding-left: 23px;
  white-space: nowrap;
`
const PropLabel = styled.span`
  width: 84px;
  flex: none;
  overflow: hidden;
`
const PropField = styled.div`
  flex: none;
  width: 125px;
  height: 22px;
  display: flex;
  justify-content: flex-end;
  align-items: center;
  gap: ${p => p.$gap || 0}px;
  padding-right: ${p => p.$pr || 0}px;
`
const PropDot = styled.i`
  width: 5px;
  height: 5px;
  margin-left: 10px;
  border-radius: 50%;
  background: #c4c4c4;
`
const SwatchCombo = styled.div`
  width: 100%;
  height: 100%;
  display: flex;
  align-items: center;
  padding: 1px;
  background: #fff;
  border: 1px solid #bdbdbd;
`
const SliderStub = styled.span`
  flex: 1;
  height: 3px;
  margin-right: 5px;
  background: #cfcfcf;
`
const Spinner = styled.div`
  flex: none;
  width: 42px;
  height: 21px;
  display: flex;
  align-items: center;
  justify-content: space-between;
  padding: 0 5px 0 7px;
  background: #fff;
  border: 1px solid #bdbdbd;
`
const SpinArrows = styled.div`
  display: flex;
  flex-direction: column;
  gap: 4px;
`
const StyleLetter = styled.span`
  font-family: "Liberation Serif", serif;
  font-size: 20px;
  line-height: 20px;
  font-weight: 700;
  font-style: ${p => (p.$i ? 'italic' : 'normal')};
  color: #3e3e4c;
`
const Corner = styled.i`
  align-self: flex-end;
  margin-bottom: 4px;
  border-style: solid;
  border-width: 0 0 5px 5px;
  border-color: transparent transparent #3f3f3f transparent;
`
const Describe = styled.div`
  flex: 1;
  padding: 18px 8px 0;
  line-height: 14px;
`
const DescribeTitle = styled.div`
  font-size: 11.5px;
  letter-spacing: 0.1px;
  font-weight: 700;
  margin-bottom: 7px;
  color: #55555f;
`

/* ---------- status bar ---------- */
const StatusBar = styled.footer`
  flex: none;
  height: 28px;
  display: flex;
  align-items: center;
  padding-left: 8px;
  color: #eaf3f9;
  background: ${BLUE};
`
const ZoomBlock = styled.div`
  margin-left: auto;
  display: flex;
  align-items: center;
`
const ZoomPercent = styled.span`
  margin-right: 14px;
  letter-spacing: 0;
`
const ZoomRound = styled.span`
  flex: none;
  width: 10px;
  height: 10px;
  border-radius: 50%;
  background: #93a9b8;
  position: relative;
  &::after {
    content: '';
    position: absolute;
    left: 2px;
    right: 2px;
    top: 4px;
    height: 2px;
    background: ${BLUE};
  }
  ${p => p.$plus && `
    &::before {
      content: '';
      position: absolute;
      top: 2px;
      bottom: 2px;
      left: 4px;
      width: 2px;
      background: ${BLUE};
    }
  `}
`
const ZoomTrack = styled.div`
  position: relative;
  width: 106px;
  height: 3px;
  margin: 0 6px;
  border-radius: 2px;
  background: #93a9b8;
`
const ZoomFill = styled.div`
  height: 100%;
  border-radius: 2px;
  background: ${CORAL};
`
const ZoomThumb = styled.i`
  position: absolute;
  left: 47px;
  top: -4px;
  width: 11px;
  height: 11px;
  border-radius: 50%;
  background: ${CORAL};
`
const Grip = styled.span`
  width: 11px;
  height: 11px;
  margin: 6px 1px 0 13px;
  background-image: radial-gradient(#9fb8c8 1px, transparent 1.2px);
  background-size: 4px 4px;
  clip-path: polygon(100% 0, 100% 100%, 0 100%);
`

/* ---------- overlays ---------- */
const Selection = styled.div`
  position: absolute;
  left: 960px;
  top: 480px;
  width: 88px;
  height: 20px;
  border: 1px solid #6f8fb8;
`
const Tasks = styled.div`
  position: absolute;
  left: 1047px;
  top: 466px;
  width: 275px;
  height: 296px;
  display: flex;
  flex-direction: column;
  background: #fff;
  border: 1px solid #c8c8c8;
`
const TasksHead = styled.div`
  flex: none;
  height: 30px;
  padding-left: 7px;
  display: flex;
  align-items: center;
  font-size: 11.5px;
  letter-spacing: 0.1px;
  font-weight: 700;
  color: #55555f;
  background: #ebebeb;
`
const TasksBody = styled.div`
  padding: 31px 8px 0 6px;
`
const TaskRow = styled.div`
  display: grid;
  grid-template-columns: 90px 1fr;
  align-items: center;
  height: 19px;
  margin-bottom: 4px;
  white-space: nowrap;
`
const TaskField = styled(Combo)`
  height: 19px;
`
const Dots = styled.span`
  letter-spacing: 0;
  font-size: 7px;
  line-height: 8px;
  color: #7a7a7a;
`
const TaskRule = styled.div`
  height: 1px;
  background: #c8c8c8;
  margin: ${p => p.$m};
`
const TaskCheck = styled.div`
  height: 23px;
  display: flex;
  align-items: center;
  gap: 2px;
  padding-left: 1px;
`
const TasksToggle = styled.div`
  position: absolute;
  left: 1038px;
  top: 467px;
  width: 9px;
  height: 11px;
  display: flex;
  align-items: center;
  justify-content: center;
  background: ${CORAL};
`
const Hint = styled.div`
  position: absolute;
  left: 1003px;
  top: 503px;
  width: 412px;
  height: 25px;
  display: flex;
  align-items: center;
  padding-left: 5px;
  background: #f2f3f7;
  border: 1px solid #55595f;
  letter-spacing: -0.22px;
  color: #33333f;
  white-space: nowrap;
`
const ArrowLayer = styled.svg`
  position: absolute;
  left: 0;
  top: 0;
  pointer-events: none;
`

/* ---------- data ---------- */
const COLS = [196, 86, 86, 87, 86, 87, 86, 86, 87, 72]
const CAPTIONS = ['Subgroup Type', 'Billable', 'Discount', 'Surcharge', 'Net Billable', 'Prepaid', 'Revenue', 'Cost', 'Net', 'Margin']
const VSEGS = [[70, 1], [24, 0], [20, 1], [19, 0], [20, 1], [19, 0], [60, 1], [19, 0], [19, 1], [20, 0], [20, 1], [20, 0], [54, 1]]
const VMARKS = [13, 25, 37, 49, 82, 94, 126, 165, 244, 283, 322, 345, 357, 369]
const TOOLS = [
  [LetterA, TableDb], [CheckTool, Database], [RichText], [Picture], [PanelTool], [TableTool], [LabelTool], 'rule',
  [LineTool], [ShapeTool], [Barcode], 'rule',
  [ChartTool], [Gauge], [SparkTool], [SigmaTool], [ClipTool], 'rule',
  [TocTool], [PageInfo], [CrossBand],
]
const TREE = [
  { t: 'tableCell39', i: CellDb, x: 108, pl: 2, gap: 6 }, { t: 'cellSumTotalRevenue', i: CellDb, x: 108, pl: 2, gap: 6 },
  { t: 'cellSumTotalCost', i: CellDb, x: 108, pl: 2, gap: 6 }, { t: 'tableCell43', i: CellDb, x: 108, pl: 2, gap: 6, on: true },
  { t: 'cellTotalMargin', i: CellPlain, x: 108, pl: 2, gap: 6 },
  { t: 'pageFooterBand1', i: TreeFooter, x: 24, chevron: 'r', mr: 1 }, { t: 'bottomMarginBand1', i: TreeFooter, x: 38 },
  { t: 'Styles', i: StylesDoc, x: 6, chevron: 'd', gap: 4, mr: 6 },
  { t: 'DataField', i: BrushDoc, x: 38, gap: 7 }, { t: 'DataFieldEvenRow', i: BrushDoc, x: 38, gap: 7 },
  { t: 'DataFieldOddRow', i: BrushDoc, x: 38, gap: 7 }, { t: 'DataFieldRight', i: BrushDoc, x: 38, gap: 7 },
]

const Ruler = () => {
  const cells = []
  for (let i = 0; i < 87; i++) {
    const k = i - 4
    const n = k > 0 && k % 8 === 0 ? k / 8 : null
    cells.push(
      <RulerCell key={i}>
        {n ? n : k === 0 ? null : <RulerDot $h={k % 4 === 0 ? 8 : 2} />}
      </RulerCell>
    )
  }
  return <RulerTrack>{cells}</RulerTrack>
}

const BandLabel = ({ level, icon: Icon, h, tight, wide, children }) => (
  <BandHead $level={level} $h={h} $tight={tight} $wide={wide}><BandToggle /><Icon />{children}</BandHead>
)

const DataRow = ({ h, cell, first, pb }) => (
  <BandTable $h={h}>
    {COLS.map((w, i) => {
      const plain = first && i === 0
      return (
        <TableCell
          key={i}
          $w={w}
          $last={i === 9}
          $right={plain}
          $bold={plain}
          $pb={pb}
          $pr={plain ? 2 : first ? 10 : i === 0 ? 12 : 13}
          $pl={first ? (i > 0 ? 7 : 1) : i === 9 ? 5 : i === 0 ? 1 : 0}
        >
          <CellText>{i === 0 ? first || cell.head : cell.body}</CellText>
          {!plain && <CellBadge $r={i === 9 ? 1 : 2}><SmallDb /></CellBadge>}
        </TableCell>
      )
    })}
  </BandTable>
)

const TaskLine = ({ label, value, dots }) => (
  <TaskRow>
    <span>{label}</span>
    <TaskField>
      <span>{value}</span>
      {dots ? <Dots>•••</Dots> : <ArrowDown $c="#6c6c6c" />}
    </TaskField>
  </TaskRow>
)

const Check = ({ on, children }) => (
  <TaskCheck>
    <Box>{on && <Svg w={11}><path d="M1.5 6l3 3 5-7.5" fill="none" stroke="#777" strokeWidth="1" /></Svg>}</Box>
    {children}
  </TaskCheck>
)

const App = () => (
  <Window>
    <GlobalStyle />
    <TitleBar>
      <QuickAccess>
        <Undo /><Redo /><QuickCaret />
      </QuickAccess>
      <ContextTab $w={82} $line="#e7b327">Table Tools</ContextTab>
      <ContextTab $w={77} $line="#8f9f87">Text Tools</ContextTab>
      <WindowTitle>Custom Revenue vs Cost - Group Summary - Report Designer</WindowTitle>
      <WinButtons><WinMin /><WinMax /><WinClose /></WinButtons>
    </TitleBar>

    <Frame>
      <TabRow>
        <RibbonTab $w={61} $active>Home</RibbonTab>
        <RibbonTab $w={66}>Layout</RibbonTab>
        <RibbonTab $w={58}>Page</RibbonTab>
        <RibbonTab $w={57}>View</RibbonTab>
        <RibbonTab $w={82}>Design</RibbonTab>
        <RibbonTab $w={77}>Text</RibbonTab>
        <ModeGroup>
          <ModeButton $w={77} $active><CrossBox />Designer</ModeButton>
          <ModeButton $w={68}><CrossBox />Preview</ModeButton>
        </ModeGroup>
      </TabRow>

      <Ribbon>
        <RibbonGroup $w={155}>
          <GroupBody $pad="0 0 0 2px">
            <BigButton $w={50}><Folder /><BigLabel>Open...</BigLabel></BigButton>
            <BigButton $w={50}><Floppy /><BigLabel>Save</BigLabel><ArrowDown $mt={3} /></BigButton>
            <BigButton $w={48}><FloppyStack /><BigLabel>Save All</BigLabel></BigButton>
          </GroupBody>
          <GroupCaption>Report</GroupCaption>
        </RibbonGroup>
        <RibbonGroup $w={116}>
          <GroupBody $pad="0 0 0 2px">
            <CmdStack>
              <Cmd>Add Data Source</Cmd>
              <Cmd>Add Calculated Field</Cmd>
              <Cmd>Add Parameter</Cmd>
            </CmdStack>
          </GroupBody>
          <GroupCaption>Data</GroupCaption>
        </RibbonGroup>
        <RibbonGroup $w={111}>
          <GroupBody $pad="0 0 0 4px">
            <BigButton $w={44} $off><Paste /><BigLabel>Paste</BigLabel></BigButton>
            <CmdStack $top={11} $left={7}>
              <CmdRow $h={26} $mb={8} $gap={4}><Cut /><Cmd $px={0} $off>Cut</Cmd></CmdRow>
              <CmdRow $h={26} $gap={4}><Copy /><Cmd $px={0} $off>Copy</Cmd></CmdRow>
            </CmdStack>
          </GroupBody>
          <GroupCaption>Clipboard</GroupCaption>
        </RibbonGroup>
        <RibbonGroup $w={280}>
          <GroupBody $pad="0 0 0 9px">
            <CmdStack $top={14} $ls="-0.1px">
              <CmdRow $h={20} $mb={11} $gap={1}>
                <Combo $w={140}>Tahoma<ArrowDown /></Combo>
                <Combo $w={53}>8.25<ArrowDown /></Combo>
              </CmdRow>
              <CmdRow $h={26}>
                <FontButton>B</FontButton>
                <FontButton $i>I</FontButton>
                <FontButton $u>U</FontButton>
                <Cmd $px={6}>Strikethrough</Cmd>
                <IconGap $w={8} /><Highlight /><ArrowDown $ml={12} />
                <IconGap $w={13} /><FontColor /><ArrowDown $ml={13} />
              </CmdRow>
            </CmdStack>
          </GroupBody>
          <GroupCaption>Font</GroupCaption>
        </RibbonGroup>
        <RibbonGroup $w={296}>
          <GroupBody $pad="0 0 0 9px">
            <CmdStack $top={11} $ls="-0.08px">
              <CmdRow $h={26} $mb={8}>
                <Cmd>Align Text Top</Cmd>
                <Cmd $on>Align Text Middle</Cmd>
                <Cmd>Align Text Bottom</Cmd>
              </CmdRow>
              <CmdRow $h={26}>
                <AlignButton><AlignLines kind="l" /></AlignButton>
                <AlignButton><AlignLines kind="c" /></AlignButton>
                <AlignButton $on><AlignLines kind="r" /></AlignButton>
                <AlignButton><AlignLines kind="j" /></AlignButton>
              </CmdRow>
            </CmdStack>
          </GroupBody>
          <GroupCaption>Alignment</GroupCaption>
        </RibbonGroup>
        <RibbonGroup $w={325}>
          <GroupBody $pad="0 0 0 16px">
            <CmdStack $ls="-0.2px">
              <CmdRow><Cmd>All Borders</Cmd><Cmd $on>No Border</Cmd></CmdRow>
              <CmdRow>
                <Cmd>Left Border</Cmd><Cmd>Top Border</Cmd><Cmd>Right Border</Cmd><Cmd>Bottom Border</Cmd>
              </CmdRow>
              <CmdRow>
                <Cmd>Border Color</Cmd><ArrowDown $ml={11} />
                <Cmd $ml={2}>Border Width</Cmd><ArrowDown $ml={-3} />
                <Combo $w={85} $ml={10}><LineSample /><ArrowDown /></Combo>
              </CmdRow>
            </CmdStack>
          </GroupBody>
          <GroupCaption>Borders</GroupCaption>
        </RibbonGroup>
        <RibbonGroup $w={77}>
          <GroupBody>
            <BigButton $w={76}><Svg w={32} h={32} /><BigLabel>Styles</BigLabel><ArrowDown $mt={3} /></BigButton>
          </GroupBody>
          <GroupCaption />
        </RibbonGroup>
        <RibbonGroup $last />
      </Ribbon>

      <Workspace>
        <Toolbox>
          <ToolPointers><Cursor /><Cursor /></ToolPointers>
          <ToolRule><ToolRuleLine /><ToolRuleLine /></ToolRule>
          {TOOLS.map((row, i) =>
            row === 'rule' ? (
              <ToolRule key={i} $pad="1px 2px 1px"><ToolRuleLine /><ToolRuleLine $empty /></ToolRule>
            ) : (
              <ToolRow key={i}>{row.map((Icon, j) => <Icon key={j} />)}</ToolRow>
            )
          )}
          <ToolFoot><ScrollLeftGlyph $c="#b0b0b0" /></ToolFoot>
        </Toolbox>

        <Center>
          <PaneHead $noline>
            <DocTitle>Custom Revenue vs Cost - Group Summary<CloseDot /></DocTitle>
            <PaneTools><ArrowDown $s={3.5} $mr={5} /></PaneTools>
          </PaneHead>
          <Surface>
            <RulerRow>
              <Burger><Svg w={10}><path d="M0 2.5h10M0 5.5h10M0 8.5h10" stroke="#7fb2d3" /></Svg></Burger>
              <Ruler />
            </RulerRow>
            <CanvasRow>
              <VRuler>
                {VSEGS.map(([h, on], i) => <VSeg key={i} $h={h} $hatch={!!on} />)}
                {VMARKS.map((y, i) => (
                  <VMark key={y} $long={i === 3 || i === 13} style={{ top: y }} />
                ))}
              </VRuler>
              <Page>
                <PageRow $h={50} $dash>
                  <Gutter /><PageBody /><RightGutter />
                </PageRow>
                <PageRow $h={280} $dash>
                  <Gutter />
                  <PageBody>
                    <BandLabel icon={BandPage} tight>pageHeaderBand1 [one band per page]</BandLabel>
                    <GreyBand $h={23}>Name: subreportHeader…</GreyBand>
                    <BandLabel icon={BandGroup} h={21} tight wide>GroupHeaderFilterText</BandLabel>
                    <PlainBand $h={16}>
                      [?FilterText]
                      <CellBadge $r={1}><SmallDb /></CellBadge>
                    </PlainBand>
                    <BandLabel icon={BandGroup} h={22} wide>GroupHeaderCaptions</BandLabel>
                    <BandTable $h={17}>
                      {COLS.map((w, i) => (
                        <TableCell key={i} $w={w} $bold $pb={2} $pl={1} $right={i > 0} $last={i === 9}>{CAPTIONS[i]}</TableCell>
                      ))}
                    </BandTable>
                    <BandLabel icon={BandDetail}>detailBand1</BandLabel>
                    <BandLabel icon={BandDetailReport}>DetailReport - "Financial Subgroup Type Totals"</BandLabel>
                    <BandLabel level={1} icon={BandDetail} h={21}>Detail</BandLabel>
                    <DataRow h={17} pb={3} cell={{ head: '[Financial Subgroup Type]', body: '[Financial Totals]' }} />
                    <BandLabel level={1} icon={BandFooter} h={21}>ReportFooter</BandLabel>
                    <DataRow h={17} first="Totals:" cell={{ body: 'Sum( [Financial Totals]' }} />
                    <BandLabel icon={BandFooter} h={22} tight>pageFooterBand1 [one band per page]</BandLabel>
                    <GreyBand $h={23}>Name: subreportFooter…</GreyBand>
                  </PageBody>
                  <RightGutter />
                </PageRow>
                <PageRow $h={47}>
                  <Gutter /><PageBody /><RightGutter />
                </PageRow>
              </Page>
            </CanvasRow>
            <HScroll>
              <HScrollLeft><ScrollLeftGlyph /></HScrollLeft>
            </HScroll>
          </Surface>
          <GroupPane>
            <PaneHead>Group and Sort</PaneHead>
            <SortTools>
              <SortTool $mr={19}><AddGroup />Add a Group<ArrowDown /></SortTool>
              <SortTool $mr={16}><AddSort />Add a Sort<ArrowDown /></SortTool>
              <SortTool $mr={8} $gap={6}><DeleteX />Delete</SortTool>
              <SortDivider />
              <SortTool $off $mr={16}><MoveIcon />Move Up</SortTool>
              <SortTool $off><MoveIcon down />Move Down</SortTool>
            </SortTools>
            <SortGrid>
              <SortHeadCell>Field Name</SortHeadCell>
              <SortHeadCell>Sort Order</SortHeadCell>
              <SortHeadCell>Show Header</SortHeadCell>
              <SortHeadCell>Show Footer</SortHeadCell>
              <SortHeadCell />
              <SortCell $white>Financial Subgroup Type<ArrowDown /></SortCell>
              <SortCell>Ascending</SortCell>
              <SortCell $center><Box /></SortCell>
              <SortCell $center><Box /></SortCell>
            </SortGrid>
          </GroupPane>
          <DockTabs>
            <DockAccent $w={109} />
            <DockTab><GroupFilterIcon />Group and Sort</DockTab>
            <DockTab><ScriptErrIcon />Scripts Errors</DockTab>
          </DockTabs>
        </Center>

        <Dock>
          <PaneHead $pr={10} $pl={7}>
            Report Explorer
            <PaneTools><PanelSquare /><Pin /><PanelClose /></PaneTools>
          </PaneHead>
          <Tree>
            <TreeList>
              {TREE.map(({ t, i: Icon, x, on, chevron, gap, pl, mr }) => (
                <TreeRow key={t} $indent={x} $on={on} $gap={gap} $pl={pl}>
                  {chevron === 'r' && <TreeChevron $mr={mr} />}
                  {chevron === 'd' && <TreeChevron $open $mr={mr} />}
                  <Icon />{t}
                </TreeRow>
              ))}
            </TreeList>
            <VScroll>
              <ScrollCap><ScrollGlyph $up /></ScrollCap>
              <ScrollThumb />
              <ScrollCap><ScrollGlyph /></ScrollCap>
            </VScroll>
          </Tree>
          <DockTabs $h={30} $pl={8} $gap={19} $pb={2}>
            <DockAccent $w={112} />
            <DockTab><ExplorerIcon />Report Explorer</DockTab>
            <DockTab><FieldListIcon />Field List</DockTab>
          </DockTabs>
          <PaneHead $pr={10} $pl={7}>
            Properties
            <PaneTools><PanelSquare /><Pin /><PanelClose /></PaneTools>
          </PaneHead>
          <QuickPane>
            <QuickInput />
            <QuickIcons><Star /></QuickIcons>
          </QuickPane>
          <PropRows>
            <PropRow><PropLabel>Background C...</PropLabel><PropField><SwatchCombo><CellSwatch $bg="#f6f6f6" /><ArrowDown $ml={6} /></SwatchCombo></PropField><PropDot /></PropRow>
            <PropRow><PropLabel>Border Color</PropLabel><PropField><SwatchCombo><CellSwatch $bg="#3f3f3f" /><ArrowDown $ml={6} /></SwatchCombo></PropField><PropDot /></PropRow>
            <PropRow><PropLabel>Border Dash</PropLabel><PropField><Combo $h={22}><span /><ArrowDown /></Combo></PropField><PropDot /></PropRow>
            <PropRow><PropLabel>Border Width</PropLabel><PropField><SliderStub /><Spinner>1<SpinArrows><ScrollGlyph $up /><ScrollGlyph /></SpinArrows></Spinner></PropField><PropDot /></PropRow>
            <PropRow><PropLabel>Borders</PropLabel><PropField $gap={9} $pr={3}><BorderSideIcon side="right" /><BorderSideIcon side="bottom" /><Corner /></PropField><PropDot /></PropRow>
            <PropRow><PropLabel>Font</PropLabel><PropField><Combo $h={22}><span /><ArrowDown /></Combo></PropField><PropDot /></PropRow>
            <PropRow><PropLabel>Font Style</PropLabel><PropField $gap={14} $pr={3}><StyleLetter>B</StyleLetter><StyleLetter $i>I</StyleLetter><Corner /></PropField></PropRow>
            <PropRow><PropLabel>Foreground C...</PropLabel><PropField><SwatchCombo><CellSwatch $bg="#3f3f3f" /><ArrowDown $ml={6} /></SwatchCombo></PropField><PropDot /></PropRow>
          </PropRows>
          <Describe>
            <DescribeTitle>Background Color</DescribeTitle>
            Gets or sets the control's background color.
          </Describe>
          <DockTabs $gap={16}>
            <DockAccent $w={85} />
            <DockTab><PropsIcon />Properties</DockTab>
            <DockTab>Report Gallery</DockTab>
          </DockTabs>
        </Dock>
      </Workspace>

      <StatusBar>
        tableRow2.tableCell43 {'{'} Location:833,0 Size:90,18 {'}'}
        <ZoomBlock>
          <ZoomPercent>100%</ZoomPercent>
          <ZoomRound />
          <ZoomTrack><ZoomFill style={{ width: '49%' }} /><ZoomThumb /></ZoomTrack>
          <ZoomRound $plus />
          <Grip />
        </ZoomBlock>
      </StatusBar>
    </Frame>

    <Selection />
    <TasksToggle><Svg w={5} h={7}><path d="M4 1 1.5 3.5 4 6" fill="none" stroke="#fff" strokeWidth="1.3" /></Svg></TasksToggle>
    <Tasks>
      <TasksHead>Table Cell Tasks</TasksHead>
      <TasksBody>
        <TaskLine label="Data Binding" value="collectionDataSource1 - Finan" />
        <TaskLine label="Format String" dots />
        <TaskLine label="Summary Running" value="Report" />
        <TaskLine label="Summary Func" value="Sum" />
        <TaskRule $m="8px 0 6px" />
        <TaskLine label="Formatting Rules" value="(Collection)" dots />
        <TaskRule $m="7px 0 5px" />
        <Check on>Can Grow</Check>
        <Check>Can Shrink</Check>
        <Check>Multiline</Check>
        <Check on>Word Wrap</Check>
      </TasksBody>
    </Tasks>
    <Hint>collectionDataSource1 - Financial Subgroup Type Totals.Financial Totals.Net Income</Hint>
    <ArrowLayer width="1417" height="931" viewBox="0 0 1417 931">
      <path d="M913 399 915 397 989 459 992 454 1007 480 979 468 984 463 913 401z" fill="#f00" />
      <path d="M922 538h100v-8l29 11-29 10v-8H922z" fill="#f00" />
    </ArrowLayer>
  </Window>
)

export default App
